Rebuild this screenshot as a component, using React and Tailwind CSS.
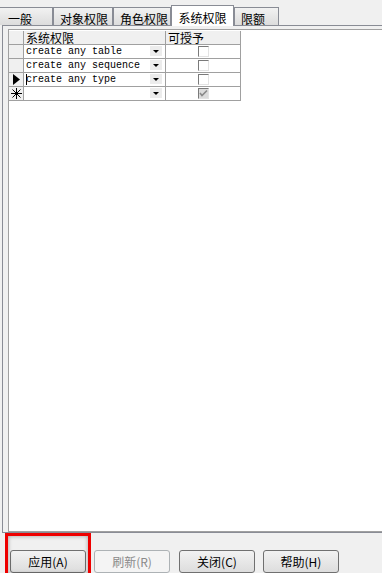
import React from 'react';

const cjk = "font-['SimSun','Noto_Sans_CJK_SC',sans-serif]";

const tabs = [
  { label: '一般', w: 'w-[53px]' },
  { label: '对象权限', w: 'w-[60px]' },
  { label: '角色权限', w: 'w-[58px]' },
  { label: '系统权限', w: 'w-[63px]', active: true },
  { label: '限额', w: 'w-[45px]' },
];

const rows = [
  { text: 'create any table', mark: '' },
  { text: 'create any sequence', mark: '' },
  { text: 'create any type', mark: 'arrow' },
  { text: '', mark: 'new' },
];

function Checkbox({ checked }) {
  return (
    <div className="w-[11px] h-[11px] border-t border-l border-t-[#7a7a7a] border-l-[#7a7a7a] border-r border-b border-r-[#e3e3e3] border-b-[#e3e3e3] bg-white flex items-center justify-center">
      {checked && (
        <svg width="9" height="9" viewBox="0 0 9 9">
          <rect x="0" y="0" width="9" height="9" fill="#dcdcdc" />
          <path d="M1 4 L3 6.5 L8 1.5" stroke="#8a8a8a" strokeWidth="1.6" fill="none" />
        </svg>
      )}
    </div>
  );
}

function DropArrow() {
  return (
    <div className="w-[12px] h-[10px] bg-[#ececec] flex items-center justify-center">
      <svg width="6" height="3" viewBox="0 0 6 3">
        <path d="M0 0 L6 0 L3 3 Z" fill="#000" />
      </svg>
    </div>
  );
}

function Button({ label, disabled, extra = '' }) {
  return (
    <div
      className={`w-[76px] h-[23px] rounded-[3px] border flex items-center justify-center text-[12px] ${cjk} ${extra} ${
        disabled
          ? 'border-[#adb2b5] text-[#8a8a8a] bg-[#f4f4f4]'
          : 'border-[#707070] text-black bg-gradient-to-b from-[#f2f2f2] to-[#dddddd]'
      }`}
    >
      {label}
    </div>
  );
}

export default function App() {
  return (
    <div className="w-[382px] h-[573px] bg-[#f0f0f0] overflow-hidden flex flex-col">
      {/* tab strip */}
      <div className="h-[25px] flex items-end pl-0 relative z-10">
        {tabs.map((t, i) =>
          t.active ? (
            <div
              key={i}
              className={`${t.w} h-[21px] border border-b-0 border-[#898c95] bg-white text-[12px] text-black ${cjk} flex items-start justify-center pt-[3px] -mb-[1px]`}
            >
              {t.label}
            </div>
          ) : (
            <div
              key={i}
              className={`${t.w} h-[18px] mb-0 border border-b-0 border-[#898c95] bg-gradient-to-b from-[#f2f2f2] to-[#dcdcdc] text-[12px] text-black ${cjk} flex items-start pl-[6px] pt-[2px] ${i === 0 ? 'border-l-0 pl-[8px]' : ''}`}
            >
              {t.label}
            </div>
          )
        )}
      </div>

      {/* page panel */}
      <div className="ml-[2px] w-[390px] h-[509px] border border-[#898c95] bg-[#f0f0f0] pt-[3px] pl-[5px]">
        <div className="h-[503px] border border-[#a0a0a0] bg-white pt-[1px]">
          {/* header */}
          <div className={`flex h-[14px] text-[12px] leading-[13px] text-black ${cjk}`}>
            <div className="w-[15px] bg-[#f0f0f0] border-r border-b border-[#a0a0a0]" />
            <div className="w-[142px] bg-[#f0f0f0] border-r border-b border-[#a0a0a0] pl-[2px]">系统权限</div>
            <div className="w-[75px] bg-[#f0f0f0] border-r border-b border-[#a0a0a0] pl-[2px]">可授予</div>
          </div>
          {rows.map((r, i) => (
            <div key={i} className="flex h-[14px]">
              <div className="w-[15px] bg-[#f0f0f0] border-r border-b border-[#a0a0a0] flex items-center justify-center">
                {r.mark === 'arrow' && (
                  <svg width="7" height="11" viewBox="0 0 7 11">
                    <path d="M0 0 L7 5.5 L0 11 Z" fill="#000" />
                  </svg>
                )}
                {r.mark === 'new' && (
                  <svg width="11" height="11" viewBox="0 0 11 11">
                    <path d="M5.5 0 V11 M0 5.5 H11 M1.5 1.5 L9.5 9.5 M9.5 1.5 L1.5 9.5" stroke="#000" strokeWidth="1" fill="none" />
                  </svg>
                )}
              </div>
              <div className="w-[142px] border-r border-b border-[#a0a0a0] flex items-center pl-[2px] pr-[3px] relative">
                {r.mark === 'arrow' && <div className="absolute left-[2px] top-[1px] w-[1px] h-[11px] bg-black" />}
                <span className="flex-1 text-[10px] leading-[13px] text-black font-['Liberation_Mono',monospace] whitespace-pre">
                  {r.text}
                </span>
                <DropArrow />
              </div>
              <div className="w-[75px] border-r border-b border-[#a0a0a0] flex items-center pl-[32px]">
                <Checkbox checked={r.mark === 'new'} />
              </div>
            </div>
          ))}
        </div>
      </div>

      {/* buttons */}
      <div className="relative flex pl-[10px] pt-[17px] gap-[8px]">
        <div className="absolute left-[5px] top-[0px] w-[86px] h-[44px] border-[3px] border-[#ee0000] shadow-[inset_0_0_4px_rgba(0,0,0,0.35)] pointer-events-none" />
        <Button label="应用(A)" />
        <Button label="刷新(R)" disabled />
        <Button label="关闭(C)" extra="ml-[1px]" />
        <Button label="帮助(H)" />
      </div>
    </div>
  );
}
